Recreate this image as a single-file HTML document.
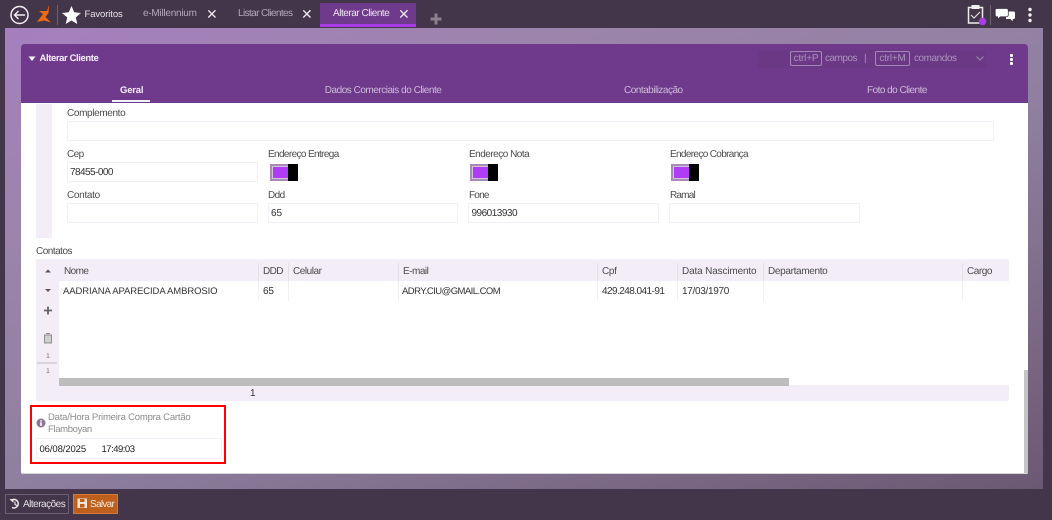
<!DOCTYPE html>
<html lang="pt"><head><meta charset="utf-8"><title>Alterar Cliente</title>
<style>
html,body{margin:0;padding:0}
body{width:1052px;height:520px;overflow:hidden;position:relative;background:#43354a;font-family:"Liberation Sans",sans-serif;font-size:10px;color:#333;text-rendering:geometricPrecision}
#p{position:absolute;left:0;top:0;width:1052px;height:520px;overflow:hidden;filter:blur(.35px)}
.a,.t{position:absolute}
.t{white-space:nowrap;line-height:12px;letter-spacing:-.5px}
.in{position:absolute;background:#fff;border:1px solid #f3f1f7;box-sizing:border-box;height:20px}
.lb{color:#4a4a4a}
.w{color:#fff}
.x{font-size:14px;color:#e8e4ea;letter-spacing:0}
.sw{position:absolute;width:28px;height:16.500px;background:#a78db5}
.sw:before{content:"";position:absolute;left:2.500px;top:3px;width:16px;height:11px;background:#b13cf5;box-shadow:0 0 0 1px #d3c3de}
.sw:after{content:"";position:absolute;right:0;top:0;width:10px;height:16.500px;background:#000}
.sep{position:absolute;width:1px;background:#e3dfe8;height:18px;top:263px}
.sp2{position:absolute;width:1px;background:#f1eff4;height:20px;top:281px}
.kbd{position:absolute;border:1px solid #a588b9;border-radius:2px;height:13px;line-height:13px;color:#ab93bd;text-align:center;letter-spacing:-.2px}
</style></head>
<body>
<div id="p">
<!-- background -->
<div class="a" style="left:0;top:0;width:1052px;height:28px;background:#43354a"></div>
<div class="a" style="left:5px;top:28px;width:1038px;height:461px;background:linear-gradient(160deg,#a57fbf 0%,#9c84ab 25%,#8f7f9f 55%,#6b5872 100%)"></div>

<!-- top bar -->
<svg class="a" style="left:0;top:0" width="130" height="28" viewBox="0 0 130 28">
<circle cx="19.500" cy="15" r="8.500" fill="none" stroke="#f2eff4" stroke-width="1.500"/>
<path d="M25 15H15M18.500 11L14.500 15L18.500 19" fill="none" stroke="#f2eff4" stroke-width="1.400"/>
<path d="M37 22L43 14L39 11L47 11L49 5L48.500 13L45.500 17L51 22.500L44 20.500Z" fill="#ee6a10"/>
<rect x="57" y="5" width="1" height="20" fill="#6d6172"/>
<path d="M71.500 6L74.200 12.300L81 13L75.800 17.400L77.300 24L71.500 20.500L65.700 24L67.200 17.400L62 13L68.800 12.300Z" fill="#fff"/>
</svg>
<div class="t" style="left:84.500px;top:9px;color:#e8e4ea;font-size:9.500px;letter-spacing:-.1px">Favoritos</div>
<div class="t" style="left:143px;top:8px;color:#b5aabb;letter-spacing:-.25px">e-Millennium</div>
<div class="t x" style="left:206px;top:8px">✕</div>
<div class="t" style="left:238px;top:8px;color:#b5aabb;letter-spacing:-.6px">Listar Clientes</div>
<div class="t x" style="left:301px;top:8px">✕</div>
<div class="a" style="left:320px;top:3px;width:95.700px;height:20.500px;background:#6f3a8c;border-bottom:3px solid #a93ce6"></div>
<div class="t" style="left:333px;top:8px;color:#efe8f3;letter-spacing:-.47px">Alterar Cliente</div>
<div class="t x" style="left:398px;top:8px">✕</div>
<svg class="a" style="left:430px;top:13px" width="12" height="12"><path d="M6 0.500V11.500M0.500 6H11.500" stroke="#8a8190" stroke-width="3"/></svg>

<svg class="a" style="left:960px;top:0" width="92" height="28" viewBox="0 0 92 28">
<rect x="8.500" y="7.500" width="14" height="15.500" fill="none" stroke="#eee" stroke-width="1.500"/>
<rect x="11.500" y="5" width="8" height="4" fill="#eee"/>
<path d="M11 15L14 18L20 12" fill="none" stroke="#ddd" stroke-width="1.200"/>
<circle cx="22.500" cy="21.500" r="3.800" fill="#a93ce6"/>
<rect x="30" y="5" width="1" height="20" fill="#6d6172"/>
<path d="M46 11.500h7.500a1.500 1.500 0 0 1 1.500 1.500v4.500a1.500 1.500 0 0 1-1.500 1.500h-.8v2.200l-2.400-2.200H46Z" fill="#fff"/>
<path d="M37 8.500h9.500a1.800 1.800 0 0 1 1.800 1.800v4.700a1.800 1.800 0 0 1-1.800 1.800h-6l-2.800 2.400v-2.400H37a1.800 1.800 0 0 1-1.800-1.800v-4.700A1.800 1.800 0 0 1 37 8.500Z" fill="#fff" stroke="#43354a" stroke-width=".8"/>
<circle cx="70" cy="9.500" r="1.700" fill="#f2f2f2"/><circle cx="70" cy="15" r="1.700" fill="#f2f2f2"/><circle cx="70" cy="20.500" r="1.700" fill="#f2f2f2"/>
</svg>

<!-- panel -->
<div class="a" style="left:21px;top:44px;width:1007px;height:430px;background:#fff;border-radius:3px 3px 2px 2px;overflow:hidden">
 <div class="a" style="left:0;top:0;width:1007px;height:58.500px;background:#6f3a8c"></div>
 <div class="a" style="left:1003px;top:326px;width:4px;height:104px;background:#c4c4c4"></div>
 <div class="a" style="left:0;top:429px;width:1007px;height:1px;background:#d8d8d8"></div>
</div>
<svg class="a" style="left:28px;top:56px" width="8" height="6"><path d="M0.500 0.500H7.500L4 5Z" fill="#fff"/></svg>
<div class="t w" style="left:39.500px;top:53px;font-weight:bold;font-size:9.500px;color:#f4eef7;letter-spacing:-.4px">Alterar Cliente</div>

<div class="a" style="left:757.500px;top:50px;width:228.500px;height:18px;background:#6a3885;border-radius:2px"></div>
<div class="kbd" style="left:790px;top:51px;width:30px;font-size:10px">ctrl+P</div>
<div class="t" style="left:825px;top:53px;color:#ab93bd">campos</div>
<div class="t" style="left:864px;top:53px;color:#ab93bd;letter-spacing:0">|</div>
<div class="kbd" style="left:875px;top:51px;width:33px;font-size:10px">ctrl+M</div>
<div class="t" style="left:914px;top:53px;color:#ab93bd;letter-spacing:-.45px">comandos</div>
<svg class="a" style="left:974.500px;top:55px" width="10" height="7"><path d="M1.500 1.500L5 5L8.500 1.500" fill="none" stroke="#9e7fb3" stroke-width="1.200"/></svg>
<div class="a" style="left:1010px;top:54px;width:3px;height:3px;background:#fff;border-radius:1px"></div>
<div class="a" style="left:1010px;top:58px;width:3px;height:3px;background:#fff;border-radius:1px"></div>
<div class="a" style="left:1010px;top:62px;width:3px;height:3px;background:#fff;border-radius:1px"></div>

<!-- tabs -->
<div class="t" style="left:120px;top:85px;color:#f2eaf6;font-weight:bold;font-size:9.500px;letter-spacing:-.2px">Geral</div>
<div class="a" style="left:112px;top:100px;width:38px;height:2px;background:#f4eff7"></div>
<div class="t" style="left:324.800px;top:85px;color:#cdbcd8;letter-spacing:-.48px">Dados Comerciais do Cliente</div>
<div class="t" style="left:624px;top:85px;color:#cdbcd8">Contabilização</div>
<div class="t" style="left:867px;top:85px;color:#cdbcd8;letter-spacing:-.53px">Foto do Cliente</div>

<!-- form -->
<div class="a" style="left:36px;top:104px;width:15.500px;height:134px;background:#f2edf7"></div>
<div class="t lb" style="left:67px;top:108px;letter-spacing:-.36px">Complemento</div>
<div class="in" style="left:67px;top:121px;width:927px"></div>

<div class="t lb" style="left:67px;top:149px;letter-spacing:-.6px">Cep</div>
<div class="in" style="left:67px;top:162px;width:190.500px"></div>
<div class="t" style="left:70px;top:167px;letter-spacing:-.55px">78455-000</div>
<div class="t lb" style="left:268px;top:149px;letter-spacing:-.62px">Endereço Entrega</div>
<div class="sw" style="left:270px;top:164px"></div>
<div class="t lb" style="left:469px;top:149px;letter-spacing:-.5px">Endereço Nota</div>
<div class="sw" style="left:470px;top:164px"></div>
<div class="t lb" style="left:670px;top:149px;letter-spacing:-.65px">Endereço Cobrança</div>
<div class="sw" style="left:671px;top:164px"></div>

<div class="t lb" style="left:67px;top:190px;letter-spacing:-.3px">Contato</div>
<div class="in" style="left:67px;top:203px;width:190.500px"></div>
<div class="t lb" style="left:268px;top:190px;letter-spacing:-.6px">Ddd</div>
<div class="in" style="left:268px;top:203px;width:190px"></div>
<div class="t" style="left:271px;top:208px;letter-spacing:0">65</div>
<div class="t lb" style="left:469px;top:190px;letter-spacing:-.8px">Fone</div>
<div class="in" style="left:468px;top:203px;width:191px"></div>
<div class="t" style="left:471.500px;top:208px">996013930</div>
<div class="t lb" style="left:670px;top:190px;letter-spacing:-.8px">Ramal</div>
<div class="in" style="left:669px;top:203px;width:191px"></div>

<!-- grid -->
<div class="t lb" style="left:36px;top:246px">Contatos</div>
<div class="a" style="left:36px;top:259px;width:973px;height:141.500px;background:#f2edf7;border-radius:2px"></div>
<div class="a" style="left:59px;top:281px;width:950px;height:104px;background:#fff"></div>
<div class="a" style="left:59px;top:378px;width:730px;height:7.500px;background:#bdbdbd"></div>

<div class="t lb" style="left:64px;top:266px;letter-spacing:-.6px">Nome</div>
<div class="t lb" style="left:263px;top:266px;letter-spacing:-.6px">DDD</div>
<div class="t lb" style="left:293px;top:266px;letter-spacing:-.45px">Celular</div>
<div class="t lb" style="left:403px;top:266px">E-mail</div>
<div class="t lb" style="left:602px;top:266px;letter-spacing:-.3px">Cpf</div>
<div class="t lb" style="left:682px;top:266px;letter-spacing:-.15px">Data Nascimento</div>
<div class="t lb" style="left:768px;top:266px;letter-spacing:-.33px">Departamento</div>
<div class="t lb" style="left:967px;top:266px;letter-spacing:-.45px">Cargo</div>

<div class="sep" style="left:258px"></div><div class="sp2" style="left:258px"></div>
<div class="sep" style="left:288px"></div><div class="sp2" style="left:288px"></div>
<div class="sep" style="left:398px"></div><div class="sp2" style="left:398px"></div>
<div class="sep" style="left:597px"></div><div class="sp2" style="left:597px"></div>
<div class="sep" style="left:677px"></div><div class="sp2" style="left:677px"></div>
<div class="sep" style="left:763px"></div><div class="sp2" style="left:763px"></div>
<div class="sep" style="left:962px"></div><div class="sp2" style="left:962px"></div>

<div class="t" style="left:63px;top:286px;font-size:9.500px;letter-spacing:-.1px">AADRIANA APARECIDA AMBROSIO</div>
<div class="t" style="left:263px;top:286px;letter-spacing:-.2px">65</div>
<div class="t" style="left:402px;top:286px;font-size:9.500px;letter-spacing:-.55px">ADRY.CIU@GMAIL.COM</div>
<div class="t" style="left:602px;top:286px;letter-spacing:-.55px">429.248.041-91</div>
<div class="t" style="left:682px;top:286px;letter-spacing:-.3px">17/03/1970</div>
<div class="t" style="left:250px;top:388px;letter-spacing:0">1</div>

<svg class="a" style="left:37px;top:262px" width="22" height="125" viewBox="0 0 22 125">
<path d="M8 10.500L11 7.500L14 10.500Z" fill="#555"/>
<path d="M8 27L11 30L14 27Z" fill="#555"/>
<path d="M11 44.500V52.500M7 48.500H15" stroke="#666" stroke-width="1.800"/>
<path d="M7.500 73H14.500V81H7.500ZM7 73H15M9 71.500H13" fill="#cfcfcf" stroke="#8e8e8e" stroke-width="1"/>
<rect x="0" y="100.500" width="20" height="1" fill="#bdbdbd"/>
</svg>
<div class="t" style="left:46px;top:351px;font-size:7px;color:#777;letter-spacing:0">1</div>
<div class="t" style="left:46px;top:366px;font-size:7px;color:#777;letter-spacing:0">1</div>

<!-- highlighted -->
<div class="a" style="left:30px;top:404.500px;width:196px;height:59px;border:2px solid #f00;box-sizing:border-box"></div>
<svg class="a" style="left:36px;top:418px" width="10" height="10"><circle cx="5" cy="5" r="4.500" fill="#8a7796"/><rect x="4.200" y="4.300" width="1.600" height="3.500" fill="#fff"/><rect x="4.200" y="2.200" width="1.600" height="1.400" fill="#fff"/></svg>
<div class="t" style="left:48px;top:412px;color:#8b8b8b;font-size:9.500px;letter-spacing:-.2px">Data/Hora Primeira Compra Cartão</div>
<div class="t" style="left:48px;top:424px;color:#8b8b8b;font-size:9.500px;letter-spacing:-.35px">Flamboyan</div>
<div class="in" style="left:36px;top:438px;width:186px;height:21px"></div>
<div class="t" style="left:39.500px;top:444px;color:#222;font-size:9.500px;letter-spacing:-.1px">06/08/2025</div>
<div class="t" style="left:101.500px;top:444px;color:#222;font-size:9.500px;letter-spacing:-.5px">17:49:03</div>

<!-- bottom -->
<div class="a" style="left:5px;top:494px;width:64px;height:20px;border:1px solid #6c5f73;box-sizing:border-box"></div>
<svg class="a" style="left:9px;top:498px" width="12" height="12" viewBox="0 0 12 12"><path d="M2 2.500A4.300 4.300 0 1 1 3 9.500" fill="none" stroke="#eee" stroke-width="1.500"/><path d="M0.500 1H4.500V5Z" fill="#eee"/><path d="M6 3.500V6.500L8 7.500" fill="none" stroke="#eee" stroke-width="1.100"/></svg>
<div class="t" style="left:23px;top:499px;color:#e6e1e9">Alterações</div>
<div class="a" style="left:73px;top:494px;width:45px;height:20px;background:#bd5f1d;border:1px solid #d27a3a;box-sizing:border-box"></div>
<svg class="a" style="left:77px;top:498px" width="11" height="11"><rect x="0.500" y="0.500" width="9.500" height="9.500" fill="#f5e4d6"/><rect x="3" y="1" width="4.500" height="3" fill="#bd5f1d"/><rect x="3" y="6" width="4.500" height="3.500" fill="#bd5f1d"/></svg>
<div class="t" style="left:90px;top:499px;color:#f6e7da;letter-spacing:-.7px">Salvar</div>
</div>
</body></html>
